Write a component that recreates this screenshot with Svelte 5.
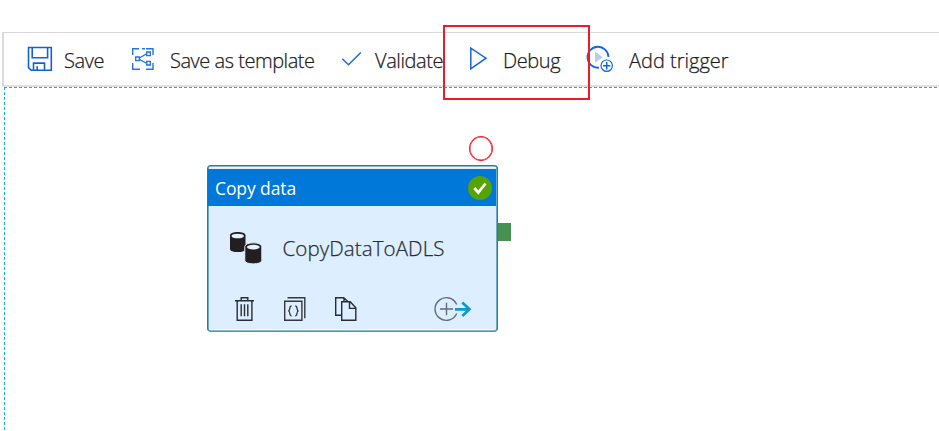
<script>
  const tools = [
    { id: 'save', label: 'Save' },
    { id: 'template', label: 'Save as template' },
    { id: 'validate', label: 'Validate' },
    { id: 'debug', label: 'Debug' },
    { id: 'trigger', label: 'Add trigger' }
  ];
</script>

<main>
  <header>
    {#each tools as tool}
      <button class={tool.id}>
        <span class="icon">
          {#if tool.id === 'save'}
            <svg width="26" height="26" viewBox="0 0 26 26" fill="none" stroke="#0f62dc" stroke-width="1.6"><path d="M1.5 1.5h22.8v22.8H4.2l-2.7-2.7zM5.2 1.5v10.3h15.4V1.5M6.5 24.3v-7.2h11v7.2M10.2 24v-3.7"/></svg>
          {:else if tool.id === 'template'}
            <svg width="24" height="24" viewBox="0 0 24 24" fill="none" stroke="#2673e1" stroke-width="1.4"><path d="M8 1.7H1.7V8M11 1.7h3M15 1.7h7V8M1.7 16v6.3H9M15 22.3h7V16M8.5 11 16 6.5M8.5 12.5 16 16.5M4.7 10h3.6v3.6H4.7zM15.7 5h3.6v3.6h-3.6zM15.7 14.4h3.6V18h-3.6z"/></svg>
          {:else if tool.id === 'validate'}
            <svg width="22" height="16" viewBox="0 0 22 16" fill="none" stroke="#1b6ae0" stroke-width="1.5"><path d="m1.3 7.7 6.2 6L19.8 1.5"/></svg>
          {:else if tool.id === 'debug'}
            <svg width="20" height="26" viewBox="0 0 20 26" fill="none" stroke="#1565dc" stroke-width="1.5"><path d="M1.8 2.1v20.8L17 12.2z"/></svg>
          {:else}
            <svg width="28" height="28" viewBox="0 0 28 28" fill="none" stroke="#1565dc"><path d="M13 22.7A10.5 10.5 0 1 1 22.5 12" stroke-width="1.8"/><path d="M9 6.6v11.2l7.7-5.6z" fill="#b4cdf4" stroke="none"/><circle cx="20.7" cy="20.7" r="5.7" stroke-width="1.2"/><path d="M20.7 17v7.4M17 20.7h7.4" stroke-width="1.5"/></svg>
          {/if}
        </span>
        <span class="label">{tool.label}</span>
      </button>
    {/each}
  </header>

  <section class="canvas">
    <span class="breakpoint"></span>
    <article>
      <div class="title"><span>Copy data</span>
        <svg width="26" height="26" viewBox="0 0 26 26"><circle cx="13" cy="13" r="12" fill="#57a300"/><path d="m7.3 13 4 4.5 7.2-9" fill="none" stroke="#fff" stroke-width="2.8"/></svg>
      </div>
      <div class="body">
        <svg width="34" height="34" viewBox="0 0 34 34">
          <path d="M1 4.3v13.6c0 4.2 15.5 4.2 15.5 0V4.3c0-4.4-15.5-4.4-15.5 0" fill="#231f20"/><ellipse cx="8.7" cy="5" rx="6.2" ry="2.3" fill="#e7f2fb"/>
          <path d="M15.8 15.6v14c0 4.4 17 4.4 17 0v-14c0-5-17-5-17 0" fill="#231f20" stroke="#dceeff"/><ellipse cx="24.3" cy="16.1" rx="6.4" ry="2.3" fill="#e7f2fb"/>
        </svg>
        <span>CopyDataToADLS</span>
      </div>
      <div class="actions">
        <svg class="trash" width="22" height="26" viewBox="0 0 22 26" fill="none" stroke="#292c30" stroke-width="1.4"><path d="M1 4.7h19M7.2 4.5V1.7h6.6v2.8M3.2 5v19.3h14.7V5M7.2 8.3v12M10.5 8.3v12M13.8 8.3v12"/></svg>
        <svg class="code" width="24" height="26" viewBox="0 0 24 26" fill="none" stroke="#34383d" stroke-width="1.4"><path d="M1.7 5.3h17.2v19H1.7zM4.5 1.7h17.3v20.6"/><path d="M8.6 9.8c-3 0-.7 4.8-3.3 5 2.6.2.3 5 3.3 5M12.2 9.8c3 0 .7 4.8 3.3 5-2.6.2-.3 5-3.3 5" stroke-width="1.3"/></svg>
        <svg class="copy" width="24" height="26" viewBox="0 0 24 26" fill="none" stroke="#292c30" stroke-width="1.4"><path d="M7.5 19.3H1.7V1.7h8l4 3.5M7.7 5.7h8.5l5.6 6v12.6H7.7zM15.5 5.7v6.7h6.3M10 1.7v3.5"/></svg>
        <svg class="output" width="38" height="26" viewBox="0 0 38 26" fill="none"><path d="M22.7 8.5a11.3 11.3 0 1 0 0 9M6 13h13M12.5 6.8v12.4" stroke="#626b7c" stroke-width="1.4"/><path d="M21 13.3h14M28.3 6.5l7.2 6.8-7.2 6.8" stroke="#0c9bc9" stroke-width="2.7"/></svg>
      </div>
    </article>
    <span class="port"></span>
  </section>
  <div class="highlight"></div>
</main>

<style>
  :global(body) { background: #fff; }
  * { box-sizing: border-box; }
  main { position: relative; width: 939px; height: 431px; padding: 32px 0 0 2px; overflow: hidden; font-family: "Open Sans", "Noto Sans", sans-serif; }
  header { height: 55px; display: flex; border-top: 1px solid #d9d9d9; border-bottom: 2px solid #e0e0e0; border-left: 2px solid #dcdcdc; }
  button { height: 52px; display: flex; align-items: center; padding: 0; border: 0; background: none; font: inherit; flex: none; }
  .save { width: 104px; padding-left: 23px; }
  .template { width: 209px; padding-left: 23px; }
  .validate { width: 127px; padding-left: 24px; }
  .debug { width: 138px; padding-left: 25px; }
  .trigger { width: 160px; padding-left: 4px; }
  .icon { display: flex; width: 37px; flex: none; }
  .template .icon { width: 39px; }
  .validate .icon { width: 34px; }
  .debug .icon { width: 34px; }
  .trigger .icon { width: 43px; }
  .label { font-size: 20px; font-weight: 300; -webkit-text-stroke: 0.25px #1c1c1c; line-height: 27px; color: #1c1c1c; white-space: nowrap; padding-top: 2px; }
  .save .label { letter-spacing: -0.4px; }
  .template .label { letter-spacing: -0.47px; }
  .validate .label { letter-spacing: -0.4px; }
  .debug .label { letter-spacing: -0.4px; }
  svg { display: block; flex: none; }
  .canvas { position: relative; margin-left: 2px; height: 344px; background: repeating-linear-gradient(90deg, #12b2e4 0 3px, transparent 3px 5px) 0 0 / 100% 1px no-repeat, repeating-linear-gradient(180deg, #12b2e4 0 3px, transparent 3px 5px) 0 0 / 1px 100% no-repeat; }
  .breakpoint { position: absolute; left: 465px; top: 49px; width: 24px; height: 25px; border: 1px solid #f61c24; border-radius: 50%; box-shadow: inset 0 0 0 0.5px #f61c24; }
  article { position: absolute; left: 202.5px; top: 78px; width: 291px; height: 167px; border: 1px solid #237f9e; border-bottom-color: #4998b3; border-radius: 4px; background: #dceeff; box-shadow: inset 0 0 0 0.6px #237f9e, inset 0 2px #f1f8ff, inset 0 -2px #f3faff; padding: 3px 0.5px 0; overflow: hidden; }
  .title { height: 37px; background: #0078d9; color: #fff; display: flex; align-items: center; justify-content: space-between; padding: 0 3.5px 0 7px; font-size: 17.5px; }
  .title span { letter-spacing: -0.1px; }
  .body { height: 84.5px; display: flex; align-items: center; padding-left: 20.5px; color: #282d32; font-size: 20.5px; font-weight: 300; -webkit-text-stroke: 0.25px #282d32; }
  .body span { margin: 0 0 0 20px; letter-spacing: 0.1px; }
  .actions { display: flex; align-items: center; height: 36px; padding-left: 25.5px; }
  .code { margin-left: 27px; }
  .copy { margin-left: 27px; }
  .output { margin-left: 76px; }
  .port { position: absolute; left: 494px; top: 136px; width: 13px; height: 18px; background: #46914f; }
  .highlight { position: absolute; left: 443px; top: 25px; width: 147px; height: 75px; border: 2px solid #ed1c24; }
</style>
